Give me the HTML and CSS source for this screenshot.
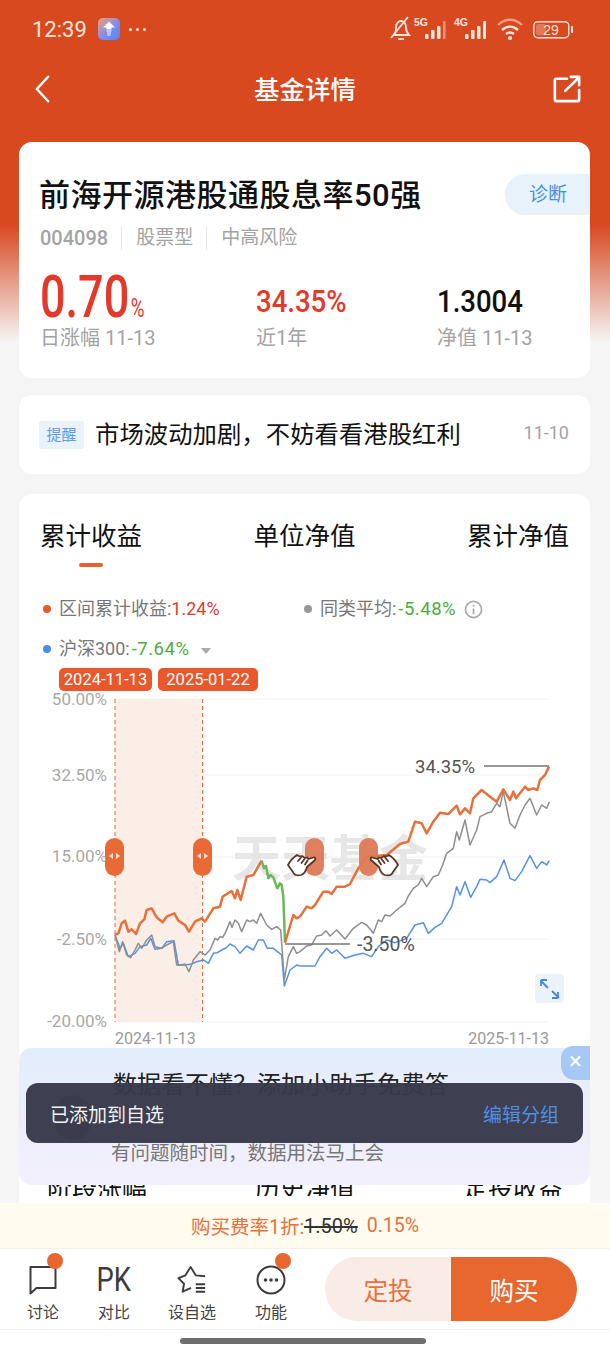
FILE: index.html
```html
<!DOCTYPE html>
<html lang="zh-CN">
<head>
    <meta charset="UTF-8">
    <meta name="viewport" content="width=device-width, initial-scale=1.0">
    <title>基金详情</title>
    <link rel="stylesheet" href="styles.css">
</head>
<body>
<div class="page">
    <div class="status-bar">
        <span class="clock">12:39</span>
        <svg class="app-icon" viewBox="0 0 22 22">
            <defs><linearGradient id="appGrad" x1="0" y1="0" x2="1" y2="1"><stop offset="0" stop-color="#f2a06a"/><stop offset=".55" stop-color="#7d8df0"/><stop offset="1" stop-color="#4c86f2"/></linearGradient></defs>
            <rect width="22" height="22" rx="5" fill="url(#appGrad)"/>
            <path d="M11 3.500l6 6h-3.500v2h-5v-2H5z" fill="#fff"/>
            <path d="M8.500 13h5M9 15h4M9.500 17h3" stroke="#fff" stroke-width="1.100"/>
        </svg>
        <span class="status-dots"><i></i><i></i><i></i></span>
        <svg class="status-icons" viewBox="0 0 190 26" width="190" height="26">
            <g fill="none" stroke="#fde6dc" stroke-width="1.800">
                <path d="M4 19c2-2 2-4 2-8 0-4 3-6 5-6s5 2 5 6c0 4 1 6 3 8z"/>
                <path d="M1 22L18 1"/>
                <path d="M8 23h6"/>
            </g>
            <g fill="#fde6dc">
                <text class="net-label" x="24" y="10">5G</text>
                <rect x="35" y="18" width="3.500" height="5" rx="1"/><rect x="41" y="14" width="3.500" height="9" rx="1"/><rect x="47" y="10" width="3.500" height="13" rx="1"/>
                <rect x="53" y="5" width="2.500" height="18" rx="1" opacity=".5"/>
                <text class="net-label" x="64" y="10">4G</text>
                <rect x="75" y="18" width="3.500" height="5" rx="1"/><rect x="81" y="14" width="3.500" height="9" rx="1"/><rect x="87" y="10" width="3.500" height="13" rx="1"/><rect x="93" y="5" width="3" height="18" rx="1"/>
            </g>
            <g fill="none" stroke="#fde6dc" stroke-width="2.400">
                <path d="M108 9c7-7 17-7 24 0" opacity=".55"/>
                <path d="M112 14c5-4.500 11-4.500 16 0"/>
                <path d="M116 18c2.500-2 5.500-2 8 0"/>
            </g>
            <circle cx="120" cy="22" r="2" fill="#fde6dc"/>
            <rect x="143.800" y="5.800" width="35" height="16" rx="4" fill="none" stroke="#fde6dc" stroke-width="1.400"/>
            <rect x="146" y="8" width="10" height="11.600" rx="2" fill="#fde6dc" opacity=".3"/>
            <text class="batt-label" x="161" y="19" text-anchor="middle">29</text>
            <rect x="181" y="10" width="2" height="7" rx="1" fill="#fde6dc"/>
        </svg>
    </div>

    <div class="title-bar">
        <svg class="back-icon" viewBox="0 0 18 30"><path d="M15 2L3 15l12 13"/></svg>
        <h1>基金详情</h1>
        <svg class="share-icon" viewBox="0 0 30 30"><path d="M15 4H3.500a1.500 1.500 0 0 0-1.500 1.500v21a1.500 1.500 0 0 0 1.500 1.500h23a1.500 1.500 0 0 0 1.500-1.500V16"/><path d="M13 17L28 2.500M19 2h9v9"/></svg>
    </div>

    <div class="content">
        <section class="card fund-card">
            <div class="fund-name">前海开源港股通股息率50强</div>
            <a class="diagnose">诊断</a>
            <div class="fund-meta">
                <span class="meta-code">004098</span>
                <span class="meta-item">股票型</span>
                <span class="meta-item">中高风险</span>
            </div>
            <div class="fund-stats">
                <div class="stat stat-day">
                    <div class="stat-value big red">0.70<small>%</small></div>
                    <div class="stat-label">日涨幅 11-13</div>
                </div>
                <div class="stat stat-year">
                    <div class="stat-value red">34.35%</div>
                    <div class="stat-label">近1年</div>
                </div>
                <div class="stat">
                    <div class="stat-value">1.3004</div>
                    <div class="stat-label">净值 11-13</div>
                </div>
            </div>
        </section>

        <section class="card notice-card">
            <span class="notice-tag">提醒</span>
            <span class="notice-text">市场波动加剧，不妨看看港股红利</span>
            <span class="notice-date">11-10</span>
        </section>

        <section class="card chart-card">
            <div class="tabs">
                <span class="tab active">累计收益</span>
                <span class="tab">单位净值</span>
                <span class="tab">累计净值</span>
            </div>
            <div class="legend">
                <div class="legend-item legend-main"><i class="dot orange"></i>区间累计收益:<b class="red">1.24%</b></div>
                <div class="legend-item"><i class="dot gray"></i>同类平均:<b class="green">-5.48%</b>
                    <svg class="info-icon" viewBox="0 0 20 20"><circle cx="10" cy="10" r="8.500"/><path d="M10 9v6M10 5v1.800"/></svg>
                </div>
                <div class="legend-item legend-full"><i class="dot blue"></i>沪深300:<b class="green">-7.64%</b><i class="caret"></i></div>
            </div>

            <div class="chart">
                <span class="date-tag tag-a">2024-11-13</span>
                <span class="date-tag tag-b">2025-01-22</span>
                <svg class="plot" viewBox="19 668 571 390" width="571" height="390">
                    <g class="grid">
                        <path d="M115 699H549M115 775H549M115 857H549M115 939H549M115 1022H549"/>
                    </g>
                    <rect class="band" x="115" y="699" width="87" height="323"/>
                    <path class="band-edge" d="M115 699V1022M202.500 699V1022"/>
                    <text class="watermark" x="232" y="876">天天基金</text>

                    <!-- series traced from the picture: 3 units to a pixel -->
                    <g transform="translate(30 690) scale(.33333)">
                        <polyline class="line-blue" points="255,735 270,775 280,760 295,800 315,790 330,770 350,765 362,745 375,778 395,775 410,755 432,752 445,825 465,825 485,822 500,815 520,810 535,820 550,790 562,788 575,780 588,774 600,762 615,770 630,790 650,768 670,780 685,750 700,750 712,775 730,775 755,795 763,888 780,840 800,825 810,828"/>
                        <polyline class="line-gray" points="255,735 268,785 278,755 290,795 302,803 315,780 325,760 335,775 350,750 365,735 375,770 395,775 410,765 430,755 440,825 455,825 465,822 477,845 490,810 510,785 525,795 540,780 555,745 563,750 570,740 578,742 585,730 600,695 606,712 615,690 625,700 635,725 650,690 660,695 670,690 680,700 692,670 710,705 725,718 740,710 752,720 763,870 775,800 790,770 800,790 810,785"/>
                        <polyline class="line-orange" points="255,735 265,730 275,700 285,692 295,725 305,718 318,732 330,700 343,688 350,660 365,655 380,682 398,697 410,680 433,670 445,692 465,705 477,725 495,695 515,685 525,695 550,655 570,650 578,620 605,603 615,625 622,600 632,630 650,560 670,555 695,512"/>
                        <polyline class="line-green" points="695,512 702,535 708,528 715,565 722,555 730,562 742,595 750,580 755,585 760,620 765,758"/>
                        <polyline class="line-orange" points="765,758 790,675 800,685 810,680"/>
                    </g>
                    <g transform="translate(300 690) scale(.33333)">
                        <polyline class="line-blue" points="0,828 45,828 60,800 80,775 95,790 110,780 135,805 165,795 190,790 215,800 235,770 260,750 285,758 320,745 345,705 370,698 385,730 405,712 425,700 455,650 470,590 480,615 495,575 512,622 530,590 540,568 560,570 570,578 590,560 612,510 630,565 645,572 665,545 690,497 710,535 725,515 740,525 748,512"/>
                        <polyline class="line-gray" points="0,785 20,768 35,765 50,738 65,735 78,722 90,738 110,720 135,747 160,715 185,697 200,705 220,730 235,690 245,695 255,675 270,678 290,660 315,640 325,618 340,595 355,585 365,565 380,590 400,560 415,555 428,525 440,490 460,475 470,425 478,450 495,390 510,465 530,420 540,380 560,370 575,365 590,340 600,350 610,305 630,400 645,415 660,375 675,345 690,325 710,375 725,345 740,355 748,335"/>
                        <polyline class="line-orange" points="0,680 20,650 35,655 45,645 70,605 85,605 95,612 110,590 135,590 150,582 175,535 200,500 260,495 300,462 325,455 345,395 365,400 380,430 400,395 420,368 445,372 470,347 480,373 495,355 510,370 520,325 545,300 570,320 590,335 610,298 630,330 640,305 648,325 675,290 685,300 700,295 712,300 720,270 735,255 747,230"/>
                    </g>

                    <path class="callout" d="M484 766H549M285 944H350"/>

                    <g class="handle">
                        <rect x="105" y="838" width="19" height="38" rx="9.500"/>
                        <path class="handle-arrows" d="M113 853v6l-4-3zM116 853v6l4-3z"/>
                        <rect x="193" y="838" width="19" height="38" rx="9.500"/>
                        <path class="handle-arrows" d="M201 853v6l-4-3zM204 853v6l4-3z"/>
                    </g>
                    <g class="handle ghost">
                        <rect x="305" y="838" width="19" height="38" rx="9.500"/>
                        <rect x="359" y="838" width="19" height="38" rx="9.500"/>
                    </g>
                    <g class="hand" transform="translate(287 853)">
                        <path d="M1 12C3 8 7 4 10 2l3 1.500 2-.5 3 2 2-.5 1.500 1.500 5-1.500c1.500-.5 2.500 1.500 1.500 2.500L20 14c-1 4-3 7-6 8-4 1-7-.5-8-3z"/>
                        <path d="M11 8l3-3.500M14.500 10l3-4M18 11.500l2.500-4"/>
                    </g>
                    <g class="hand" transform="translate(399 853) scale(-1 1)">
                        <path d="M1 12C3 8 7 4 10 2l3 1.500 2-.5 3 2 2-.5 1.500 1.500 5-1.500c1.500-.5 2.500 1.500 1.500 2.500L20 14c-1 4-3 7-6 8-4 1-7-.5-8-3z"/>
                        <path d="M11 8l3-3.500M14.500 10l3-4M18 11.500l2.500-4"/>
                    </g>

                    <rect class="zoom-box" x="535" y="974" width="29" height="29" rx="4"/>
                    <path class="zoom-arrows" d="M541 981l7 7M541 980v6M541 980h6M559 998l-7-7M558 998v-6M558 998h-6"/>
                </svg>
                <span class="y-label y1">50.00%</span>
                <span class="y-label y2">32.50%</span>
                <span class="y-label y3">15.00%</span>
                <span class="y-label y4">-2.50%</span>
                <span class="y-label y5">-20.00%</span>
                <span class="call-label call-high">34.35%</span>
                <span class="call-label call-low">-3.50%</span>
                <span class="x-label x-start">2024-11-13</span>
                <span class="x-label x-end">2025-11-13</span>
            </div>

            <div class="more-tabs">
                <span>阶段涨幅</span>
                <span>历史净值</span>
                <span>定投收益</span>
            </div>
        </section>
    </div>

    <div class="fee-strip">购买费率1折:<s>1.50%</s><span class="fee-now">0.15%</span></div>

    <div class="action-bar">
        <div class="action">
            <i class="badge"></i>
            <svg class="action-icon" viewBox="0 0 30 30"><path d="M2.500 2h25v21H8.500l-6 5.500z"/></svg>
            <span>讨论</span>
        </div>
        <div class="action action-pk">
            <div class="pk">PK</div>
            <span>对比</span>
        </div>
        <div class="action action-star">
            <svg class="action-icon" viewBox="0 0 32 30"><path d="M30 11L20 10 14.500 1 9 10 1.500 13l6 6L6 27.500l9-4M20 19.500h10M20 23.500h10M20 27.500h10"/></svg>
            <span>设自选</span>
        </div>
        <div class="action action-more">
            <i class="badge"></i>
            <svg class="action-icon" viewBox="0 0 30 30"><circle cx="15" cy="15" r="13.500"/><circle class="solid" cx="9.500" cy="15" r="1.800"/><circle class="solid" cx="15" cy="15" r="1.800"/><circle class="solid" cx="20.500" cy="15" r="1.800"/></svg>
            <span>功能</span>
        </div>
        <div class="buy-group">
            <button class="btn-plan">定投</button>
            <button class="btn-buy">购买</button>
        </div>
    </div>
    <div class="home-zone"><div class="home-bar"></div></div>

    <div class="promo">
        <div class="promo-avatar"></div>
        <div class="promo-title">数据看不懂？添加小助手免费答</div>
        <div class="promo-sub">有问题随时间，数据用法马上会</div>
        <div class="promo-close">×</div>
    </div>
    <div class="toast">
        <span>已添加到自选</span>
        <a>编辑分组</a>
    </div>
</div>
</body>
</html>
```

FILE: styles.css
```css
* {
    margin: 0;
    padding: 0;
    box-sizing: border-box;
}
body {
    width: 610px;
    height: 1356px;
    overflow: hidden;
    font-family: "Roboto", "Noto Sans CJK SC", sans-serif;
    background: #f5f5f5;
}
.page {
    position: relative;
    width: 610px;
    height: 1356px;
    display: flex;
    flex-direction: column;
    background: linear-gradient(#d84920 0, #d84920 225px, #f5f5f5 342px);
}

/* status bar */
.status-bar {
    height: 58px;
    display: flex;
    align-items: center;
    padding-left: 32px;
    color: #fde6dc;
}
.clock {
    font-size: 22px;
    width: 66px;
}
.app-icon {
    width: 22px;
    height: 22px;
}
.status-dots {
    display: flex;
    gap: 4px;
    margin-left: 9px;
}
.status-dots i {
    width: 3px;
    height: 3px;
    border-radius: 50%;
    background: #fde6dc;
}
.status-icons {
    margin-left: auto;
    margin-right: 30px;
}
.net-label {
    font-family: "Liberation Sans", sans-serif;
    font-size: 10.500px;
    font-weight: 700;
}
.batt-label {
    font-family: "Liberation Sans", sans-serif;
    font-size: 14px;
    fill: #fde6dc;
}

/* title bar */
.title-bar {
    height: 62px;
    display: flex;
    align-items: center;
    justify-content: space-between;
    padding: 0 29px 0 34px;
}
.title-bar h1 {
    margin: 0 0 4px 6px;
    font-size: 25.500px;
    font-weight: 500;
    color: #fff;
}
.back-icon {
    width: 17px;
    height: 30px;
    fill: none;
    stroke: #fff;
    stroke-width: 2.600;
    stroke-linecap: round;
    stroke-linejoin: round;
}
.share-icon {
    width: 28px;
    height: 28px;
    fill: none;
    stroke: #fff;
    stroke-width: 2.800;
    stroke-linecap: round;
    stroke-linejoin: round;
}

/* cards */
.content {
    flex: 1;
    min-height: 0;
    padding: 22px 20px 0 19px;
    display: flex;
    flex-direction: column;
    overflow: hidden;
}
.card {
    background: #fff;
    border-radius: 13px;
}
.red { color: #e2392b; }
.green { color: #4cae3f; }

.fund-card {
    position: relative;
    height: 236px;
    padding: 32px 21px 0;
    flex: none;
}
.fund-name {
    margin-left: -1px;
    font-size: 31px;
    font-weight: 500;
    line-height: 44px;
    letter-spacing: .5px;
    color: #111;
}
.diagnose {
    position: absolute;
    right: 0;
    top: 32px;
    width: 85px;
    height: 41px;
    padding-left: 24px;
    border-radius: 21px 0 0 21px;
    background: #e8f2fb;
    color: #4a90dc;
    font-size: 19px;
    line-height: 41px;
}
.fund-meta {
    display: flex;
    align-items: center;
    margin-top: 7px;
    height: 26px;
    color: #a3a3a3;
    font-size: 19px;
}
.meta-code {
    font-size: 20px;
    font-weight: 500;
}
.meta-item {
    margin-left: 13px;
    padding-left: 14px;
    border-left: 1px solid #e8e8e8;
    line-height: 24px;
}
.fund-stats {
    display: flex;
    align-items: flex-end;
    margin-top: 19px;
}
.stat-day { width: 216px; }
.stat-year { width: 181px; }
.stat-value {
    font-size: 32px;
    font-weight: 500;
    line-height: 38px;
    color: #111;
    transform: scaleX(.86);
    transform-origin: left center;
}
.stat-value.red { color: #e2392b; }
.stat-value.big {
    font-size: 60px;
    line-height: 54px;
    transform: scaleX(.75);
}
.stat-value small {
    font-size: 25px;
    font-weight: 400;
    line-height: 0;
    margin-left: 2px;
}
.stat-label {
    font-size: 20px;
    line-height: 28px;
    color: #a3a3a3;
}
.stat-year .stat-label, .stat:last-child .stat-label {
    margin-top: 4px;
}

.notice-card {
    height: 79px;
    margin-top: 17px;
    padding: 0 21px 4px 20px;
    flex: none;
    display: flex;
    align-items: center;
}
.notice-tag {
    width: 45px;
    height: 28px;
    margin-top: 4px;
    border-radius: 3px;
    background: #e9f1fb;
    color: #5f9be0;
    font-size: 15px;
    line-height: 28px;
    text-align: center;
}
.notice-text {
    margin-left: 11px;
    font-size: 24.400px;
    color: #111;
}
.notice-date {
    margin-left: auto;
    font-size: 18px;
    color: #a3a3a3;
}

/* chart card */
.chart-card {
    margin-top: 20px;
    flex: 1;
    min-height: 0;
    overflow: hidden;
    border-radius: 13px 13px 0 0;
}
.tabs {
    display: flex;
    justify-content: space-between;
    padding: 24px 21px 0;
    font-size: 25.500px;
    line-height: 36px;
    color: #111;
}
.tab.active {
    position: relative;
}
.tab.active::after {
    content: "";
    position: absolute;
    left: 39px;
    bottom: -13px;
    width: 24px;
    height: 4px;
    border-radius: 2px;
    background: #e5602f;
}
.legend {
    display: flex;
    flex-wrap: wrap;
    margin-top: 35px;
    padding-left: 24px;
    font-size: 18px;
    line-height: 40px;
    color: #777;
}
.legend-item {
    display: flex;
    align-items: center;
}
.legend-item b { font-weight: 400; }
.legend-item b.green {
    margin-left: 2px;
    font-size: 18.500px;
    letter-spacing: .5px;
}
.legend-main { width: 261px; }
.legend-full { width: 100%; }
.dot {
    width: 8px;
    height: 8px;
    border-radius: 50%;
    margin-right: 8px;
}
.dot.orange { background: #e8582c; }
.dot.gray { background: #999; }
.dot.blue { background: #4a8ce8; }
.info-icon {
    width: 19px;
    height: 19px;
    margin-left: 8px;
    fill: none;
    stroke: #aaa;
    stroke-width: 1.800;
}
.caret {
    margin: 3px 0 0 12px;
    border: 5px solid transparent;
    border-top: 6px solid #aaa;
    border-bottom: 0;
}
.chart {
    position: relative;
    height: 390px;
    margin-top: -1px;
}
.plot {
    display: block;
}
.date-tag {
    position: absolute;
    top: 0;
    height: 23px;
    border-radius: 5px;
    background: #e8582c;
    color: #fff;
    font-size: 16.500px;
    line-height: 23px;
    text-align: center;
    z-index: 1;
}
.tag-a { left: 40px; width: 93px; }
.tag-b { left: 139px; width: 100px; }
.grid path {
    fill: none;
    stroke: #f2f2f2;
    stroke-width: 1;
}
.band { fill: #fbeee7; }
.band-edge {
    fill: none;
    stroke: #e8693a;
    stroke-width: 1;
    stroke-dasharray: 4 3;
}
.watermark {
    font-family: "Noto Sans CJK SC", sans-serif;
    font-size: 49px;
    font-weight: 700;
    fill: #e6e6e6;
}
.line-orange, .line-green, .line-gray, .line-blue {
    fill: none;
    stroke-linejoin: round;
}
.line-orange { stroke: #e8703a; stroke-width: 7.500; }
.line-green { stroke: #6bb85a; stroke-width: 7.500; }
.line-gray { stroke: #8e8e8e; stroke-width: 4.500; }
.line-blue { stroke: #5392e4; stroke-width: 4.500; }
.callout {
    fill: none;
    stroke: #777;
    stroke-width: 1.500;
}
.handle rect { fill: #e96a35; }
.handle.ghost rect { fill: #dd7a55; opacity: .95; }
.handle-arrows { fill: #fbe3d8; }
.hand path {
    fill: #fff;
    stroke: #5a3525;
    stroke-width: 1.800;
    stroke-linejoin: round;
    stroke-linecap: round;
}
.zoom-box { fill: #eaf2fc; }
.zoom-arrows {
    fill: none;
    stroke: #4a86e0;
    stroke-width: 1.800;
}
.y-label, .call-label, .x-label {
    position: absolute;
    white-space: nowrap;
}
.y-label {
    right: 483px;
    font-size: 17px;
    line-height: 20px;
    color: #a8a8a8;
}
.y1 { top: 21px; }
.y2 { top: 97px; }
.y3 { top: 178px; }
.y4 { top: 261px; }
.y5 { top: 343px; }
.call-label {
    font-size: 18.500px;
    line-height: 22px;
    color: #555;
}
.call-high { left: 396px; top: 88px; }
.call-low { left: 338px; top: 266px; font-size: 19.500px; }
.x-label {
    top: 361px;
    font-size: 16px;
    line-height: 20px;
    color: #999;
}
.x-start { left: 96px; }
.x-end { right: 41px; }
.more-tabs {
    display: flex;
    justify-content: space-between;
    height: 24px;
    overflow: hidden;
    padding: 0 27px 0 28px;
    margin-top: 114px;
    font-size: 25px;
    line-height: 36px;
    color: #111;
}

/* bottom */
.fee-strip {
    height: 46px;
    flex: none;
    display: flex;
    align-items: center;
    justify-content: center;
    background: #fffbee;
    border-bottom: 1px solid #f3f0e6;
    color: #e8703a;
    font-size: 19.500px;
}
.fee-strip s { color: #333; font-size: 20px; }
.fee-now { margin-left: 9px; }
.action-bar {
    height: 81px;
    flex: none;
    display: flex;
    align-items: center;
    background: #fff;
    border-bottom: 1px solid #f2f2f2;
    padding-left: 27px;
}
.action {
    position: relative;
    display: flex;
    flex-direction: column;
    align-items: center;
    width: 32px;
    margin-top: 10px;
    color: #444;
    font-size: 16px;
    line-height: 22px;
    white-space: nowrap;
}
.action-pk { margin-left: 39px; }
.action-star { margin-left: 38px; width: 48px; }
.action-more { margin-left: 39px; }
.action-icon {
    width: 30px;
    height: 30px;
    margin-bottom: 7px;
    fill: none;
    stroke: #3c3c3c;
    stroke-width: 2;
    stroke-linejoin: round;
}
.action-icon .solid { fill: #3c3c3c; stroke: none; }
.pk {
    height: 30px;
    margin-bottom: 7px;
    font-size: 33px;
    line-height: 30px;
    color: #3c3c3c;
    transform: scaleX(.83);
}
.badge {
    position: absolute;
    top: -12px;
    right: -4px;
    width: 16px;
    height: 16px;
    border-radius: 50%;
    background: #e8672f;
}
.buy-group {
    display: flex;
    margin-left: 38px;
}
.buy-group button {
    width: 126px;
    height: 64px;
    border: none;
    font-family: inherit;
    font-size: 24.500px;
}
.btn-plan {
    border-radius: 32px 0 0 32px;
    background: #f9ebe5;
    color: #e8703a;
}
.btn-buy {
    border-radius: 0 32px 32px 0;
    background: #e8672f;
    color: #fff;
}
.home-zone {
    height: 26px;
    flex: none;
    background: #fff;
    padding-top: 8px;
}
.home-bar {
    width: 246px;
    height: 6px;
    margin-left: 180px;
    border-radius: 3px;
    background: #6e6e6e;
}

/* floating promo + toast */
.promo {
    position: absolute;
    left: 19px;
    top: 1048px;
    width: 571px;
    height: 137px;
    border-radius: 13px;
    background: linear-gradient(#e2edfc, #eeeefb 55%, #f2f0fc);
}
.promo-avatar {
    position: absolute;
    left: 36px;
    top: 47px;
    width: 36px;
    height: 45px;
    border-radius: 18px;
    background: #8a8fa4;
}
.promo-title {
    position: absolute;
    left: 94px;
    top: 20px;
    font-size: 24px;
    line-height: 34px;
    color: #222;
    white-space: nowrap;
}
.promo-sub {
    position: absolute;
    left: 92px;
    top: 92px;
    font-size: 19.500px;
    line-height: 28px;
    color: #777;
    white-space: nowrap;
}
.promo-close {
    position: absolute;
    right: 0;
    top: -2px;
    width: 29px;
    height: 34px;
    border-radius: 12px 0 0 14px;
    background: #a5c8f5;
    color: #fff;
    font-size: 24px;
    line-height: 30px;
    text-align: center;
}
.toast {
    position: absolute;
    left: 26px;
    top: 1083px;
    width: 557px;
    height: 60px;
    padding: 0 24px;
    border-radius: 12px;
    display: flex;
    align-items: center;
    justify-content: space-between;
    background: rgba(56, 57, 74, .97);
    color: #f2f2f4;
    font-size: 19px;
}
.toast a { color: #4f8fe6; }
```
